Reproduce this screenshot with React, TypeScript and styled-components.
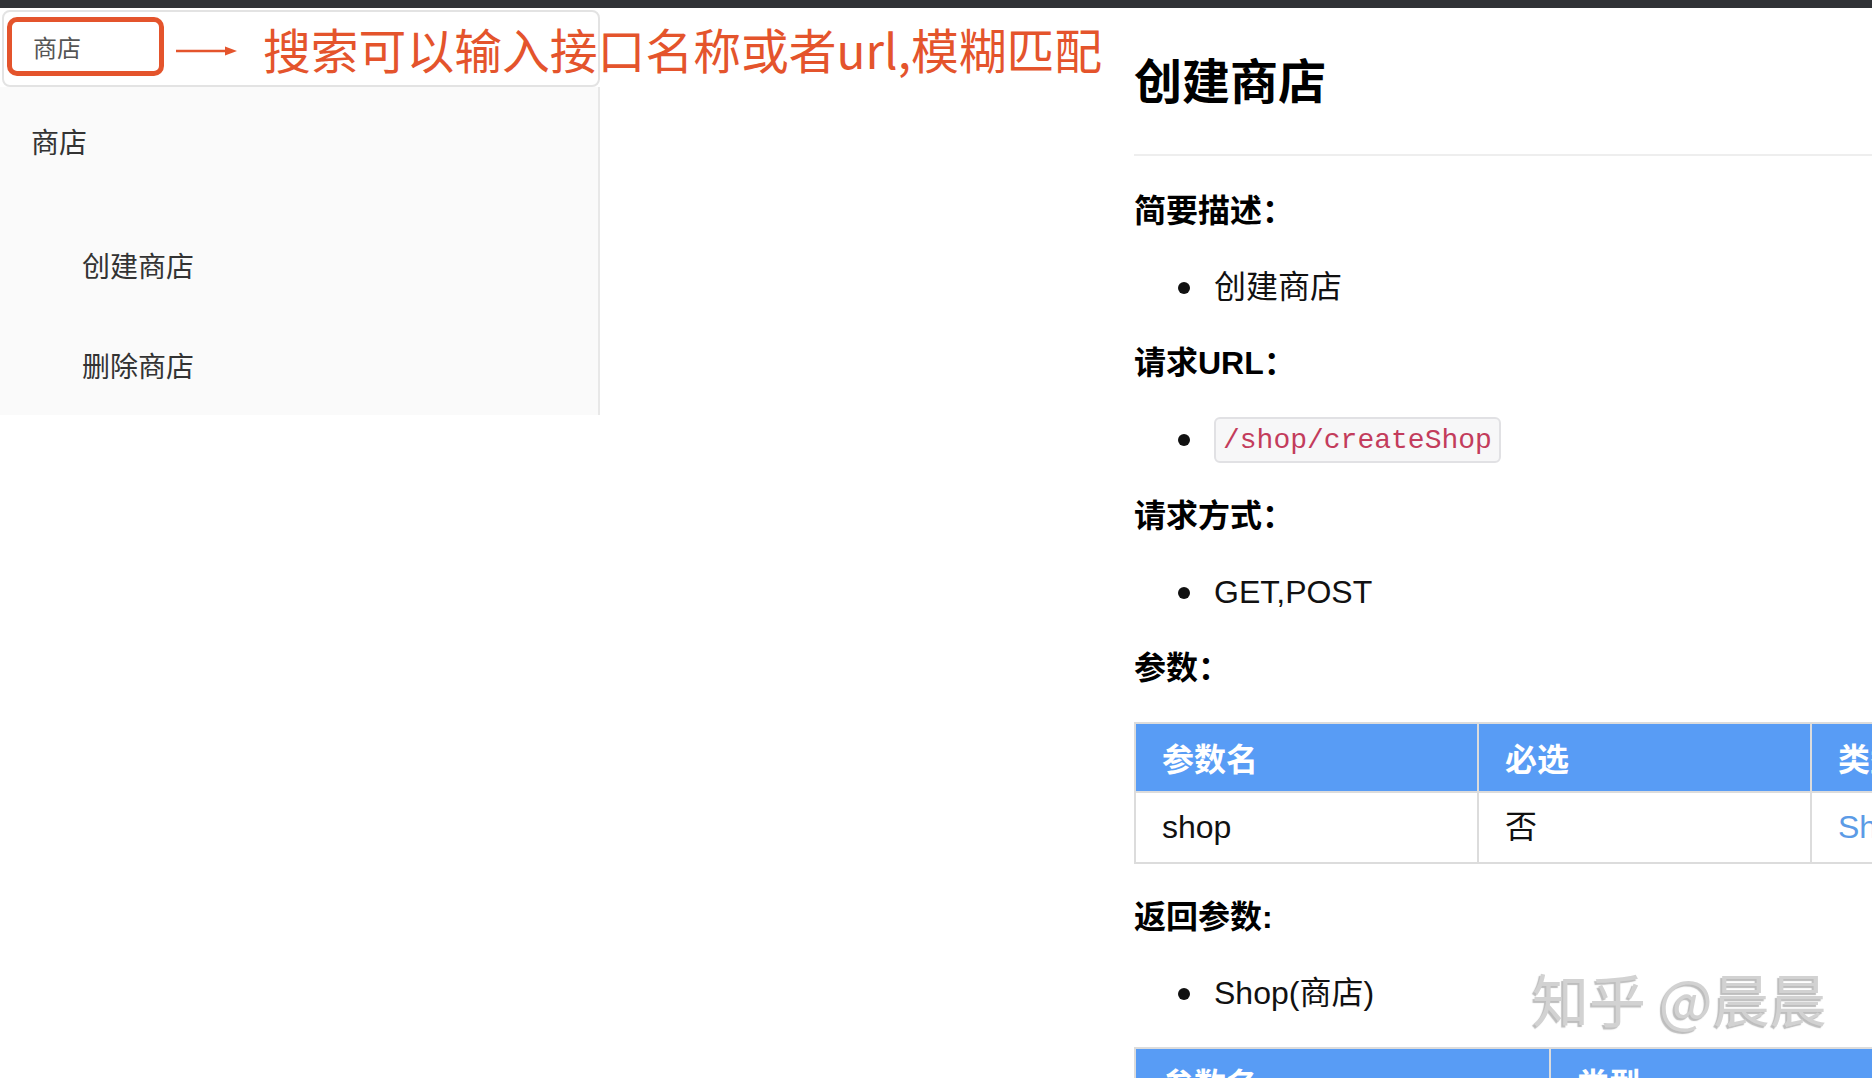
import React from "react";
import styled, { createGlobalStyle } from "styled-components";

const GlobalStyle = createGlobalStyle`
  html, body {
    margin: 0;
    padding: 0;
    background: #ffffff;
  }
  body {
    font-family: "Liberation Sans", "Noto Sans CJK SC", sans-serif;
    color: #111111;
  }
  * { box-sizing: border-box; }
`;

const Page = styled.div`
  position: relative;
  width: 1872px;
  height: 1078px;
  overflow: hidden;
  background: #ffffff;
  display: flex;
  flex-direction: column;
`;

const TopBar = styled.div`
  height: 8px;
  flex-shrink: 0;
  background: #303236;
`;

const Body = styled.div`
  flex: 1;
  min-height: 0;
  display: flex;
  align-items: flex-start;
`;

const Sidebar = styled.aside`
  width: 600px;
  flex-shrink: 0;
  display: flex;
  flex-direction: column;
`;

const SearchCard = styled.div`
  margin: 2px 0 0 2px;
  width: 598px;
  height: 77px;
  border: 2px solid #e3e3e3;
  border-radius: 8px;
  background: #ffffff;
  padding: 5px 0 0 3px;
  display: flex;
  align-items: center;
  align-self: flex-start;
`;

const SearchRow = styled.div`
  display: flex;
  align-items: center;
  height: 59px;
  align-self: flex-start;
`;

const SearchInput = styled.div`
  width: 157px;
  height: 59px;
  flex-shrink: 0;
  border: 5px solid #e4542c;
  border-radius: 10px;
  padding-left: 21px;
  display: flex;
  align-items: center;
  font-family: "Noto Sans CJK SC", sans-serif;
  font-size: 24px;
  color: #555555;
`;

const Arrow = styled.svg`
  flex-shrink: 0;
  margin: 8px 0 0 12px;
`;

const Annotation = styled.span`
  flex-shrink: 0;
  white-space: nowrap;
  margin: 4px 0 0 26px;
  font-family: "Noto Sans CJK SC", sans-serif;
  font-size: 47.8px;
  line-height: 1;
  font-weight: 400;
  color: #e4542c;
`;

const Menu = styled.nav`
  height: 328px;
  background: #fafafa;
  border-right: 2px solid #e8e8e8;
  font-family: "Noto Sans CJK SC", sans-serif;
  font-size: 28px;
  line-height: 40px;
  color: #333333;
`;

const GroupTitle = styled.div`
  padding: 34px 0 54px 31px;
`;

const MenuItem = styled.div`
  padding: 30px 0 30px 82px;
`;

const Main = styled.main`
  flex: 1;
  min-width: 0;
  height: 100%;
  overflow: hidden;
  padding: 40px 0 0 534px;
  display: flex;
  flex-direction: column;
  gap: 31px;
`;

const Title = styled.h1`
  margin: -3px 0 11px;
  font-family: "Noto Sans CJK SC", sans-serif;
  font-size: 48px;
  line-height: 67px;
  font-weight: 700;
  color: #000000;
`;

const Rule = styled.hr`
  margin: 0 0 2px;
  height: 2px;
  border: none;
  background: #eeeeee;
  flex-shrink: 0;
`;

const Heading = styled.h3`
  margin: 0;
  font-family: "Liberation Sans", "Noto Sans CJK SC", sans-serif;
  font-size: 32px;
  line-height: 45px;
  font-weight: 700;
  color: #000000;
`;

const List = styled.ul`
  margin: 0;
  padding: 0 0 0 44px;
  list-style: none;
`;

const Item = styled.li`
  display: flex;
  align-items: center;
  gap: 24px;
  font-size: 32px;
  line-height: 45px;
  color: #111111;
`;

const Bullet = styled.span`
  width: 12px;
  height: 12px;
  border-radius: 50%;
  background: #111111;
  flex-shrink: 0;
`;

const Code = styled.code`
  display: inline-flex;
  align-items: center;
  height: 46px;
  padding: 0 7px;
  border: 2px solid #e1e1e4;
  border-radius: 6px;
  background: #f7f7f8;
  font-family: "Liberation Mono", monospace;
  font-size: 28px;
  color: #c33c5c;
`;

const Table = styled.table<{ $width: number }>`
  width: ${(p) => p.$width}px;
  flex-shrink: 0;
  border-collapse: collapse;
  table-layout: fixed;
  font-size: 32px;
  line-height: 45px;
`;

const Th = styled.th`
  padding: 11px 26px;
  border: 2px solid #dcdcdc;
  background: #589cf5;
  color: #ffffff;
  font-weight: 700;
  text-align: left;
  white-space: nowrap;
  overflow: hidden;
  font-family: "Noto Sans CJK SC", sans-serif;
`;

const Td = styled.td<{ $link?: boolean }>`
  padding: 12px 26px;
  border: 2px solid #dcdcdc;
  color: ${(p) => (p.$link ? "#5b9be6" : "#111111")};
  white-space: nowrap;
  overflow: hidden;
`;

const Watermark = styled.div`
  position: absolute;
  left: 1532px;
  top: 969px;
  font-family: "Noto Sans CJK SC", sans-serif;
  font-size: 57px;
  line-height: 1;
  color: #d2d2d2;
  text-shadow: -2px 2px 1px rgba(90, 90, 90, 0.4);
  white-space: nowrap;
  pointer-events: none;
`;

export default function App() {
  return (
    <Page>
      <GlobalStyle />
      <TopBar />
      <Body>
        <Sidebar>
          <SearchCard>
            <SearchRow>
              <SearchInput>商店</SearchInput>
              <Arrow width="61" height="14" viewBox="0 0 61 14">
                <line x1="0" y1="7" x2="52" y2="7" stroke="#e4542c" strokeWidth="2.5" />
                <polygon points="49,2.5 61,7 49,11.5" fill="#e4542c" />
              </Arrow>
              <Annotation>搜索可以输入接口名称或者url,模糊匹配</Annotation>
            </SearchRow>
          </SearchCard>
          <Menu>
            <GroupTitle>商店</GroupTitle>
            <MenuItem>创建商店</MenuItem>
            <MenuItem>删除商店</MenuItem>
          </Menu>
        </Sidebar>
        <Main>
          <Title>创建商店</Title>
          <Rule />
          <Heading>简要描述：</Heading>
          <List>
            <Item>
              <Bullet />
              创建商店
            </Item>
          </List>
          <Heading>请求URL：</Heading>
          <List>
            <Item>
              <Bullet />
              <Code>/shop/createShop</Code>
            </Item>
          </List>
          <Heading>请求方式：</Heading>
          <List>
            <Item>
              <Bullet />
              GET,POST
            </Item>
          </List>
          <Heading>参数：</Heading>
          <Table $width={1076}>
            <colgroup>
              <col style={{ width: 343 }} />
              <col style={{ width: 333 }} />
              <col style={{ width: 400 }} />
            </colgroup>
            <thead>
              <tr>
                <Th>参数名</Th>
                <Th>必选</Th>
                <Th>类型</Th>
              </tr>
            </thead>
            <tbody>
              <tr>
                <Td>shop</Td>
                <Td>否</Td>
                <Td $link>Shop</Td>
              </tr>
            </tbody>
          </Table>
          <Heading>返回参数:</Heading>
          <List>
            <Item>
              <Bullet />
              Shop(商店)
            </Item>
          </List>
          <Table $width={1015}>
            <colgroup>
              <col style={{ width: 415 }} />
              <col style={{ width: 600 }} />
            </colgroup>
            <thead>
              <tr>
                <Th>参数名</Th>
                <Th>类型</Th>
              </tr>
            </thead>
          </Table>
        </Main>
      </Body>
      <Watermark>知乎 @晨晨</Watermark>
    </Page>
  );
}
